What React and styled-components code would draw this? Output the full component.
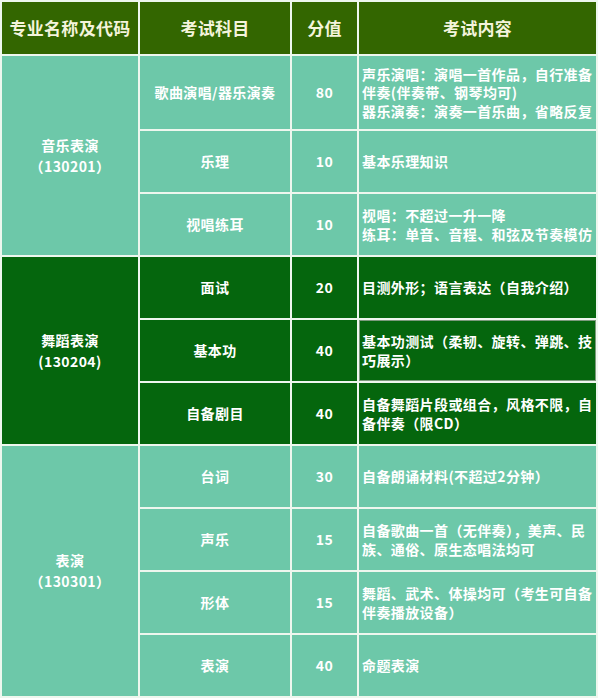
import React from "react";
import styled, { createGlobalStyle, css } from "styled-components";

const Global = createGlobalStyle`
  html, body { margin: 0; padding: 0; background: #ffffff; }
  body { font-family: "Noto Sans CJK SC", "Noto Sans", sans-serif; }
`;

const tones = {
  head: css`background: #336600; color: #f4f4dc;`,
  light: css`background: #6dc8a9; color: #ffffff;`,
  dark: css`background: #05660d; color: #ffffff;`,
};

const Table = styled.div`
  display: grid;
  grid-template-columns: 136px 150px 65px 237px;
  grid-template-rows: 52px 73px repeat(9, 61px);
  gap: 2px;
  padding: 2px;
  width: 598px;
  box-sizing: border-box;
  background: #eef7ee;
`;

const Cell = styled.div`
  ${(p) => tones[p.$tone]}
  display: flex;
  align-items: center;
  justify-content: ${(p) => (p.$left ? "flex-start" : "center")};
  text-align: ${(p) => (p.$left ? "left" : "center")};
  padding: ${(p) => (p.$left ? "0 0 0 3px" : "0")};
  grid-row: span ${(p) => p.$span || 1};
  font-size: 14px;
  font-weight: 700;
  letter-spacing: 0.4px;
  line-height: 18.5px;
  white-space: nowrap;
  box-shadow: ${(p) => (p.$outlined ? "inset 0 0 0 1px #7d9a7d" : "none")};
`;

const HeadCell = styled(Cell)`
  font-size: 17px;
  letter-spacing: 0.3px;
`;

const Major = styled(Cell)`
  flex-direction: column;
  line-height: 21px;
`;

const groups = [
  {
    tone: "light",
    name: "音乐表演",
    code: "（130201）",
    rows: [
      ["歌曲演唱/器乐演奏", "80", ["声乐演唱：演唱一首作品，自行准备", "伴奏(伴奏带、钢琴均可)", "器乐演奏：演奏一首乐曲，省略反复"]],
      ["乐理", "10", ["基本乐理知识"]],
      ["视唱练耳", "10", ["视唱：不超过一升一降", "练耳：单音、音程、和弦及节奏模仿"]],
    ],
  },
  {
    tone: "dark",
    name: "舞蹈表演",
    code: "(130204)",
    rows: [
      ["面试", "20", ["目测外形；语言表达（自我介绍）"]],
      ["基本功", "40", ["基本功测试（柔韧、旋转、弹跳、技", "巧展示）"], true],
      ["自备剧目", "40", ["自备舞蹈片段或组合，风格不限，自", "备伴奏（限CD）"]],
    ],
  },
  {
    tone: "light",
    name: "表演",
    code: "（130301）",
    rows: [
      ["台词", "30", ["自备朗诵材料(不超过2分钟）"]],
      ["声乐", "15", ["自备歌曲一首（无伴奏），美声、民", "族、通俗、原生态唱法均可"]],
      ["形体", "15", ["舞蹈、武术、体操均可（考生可自备", "伴奏播放设备）"]],
      ["表演", "40", ["命题表演"]],
    ],
  },
];

const Lines = ({ lines }) =>
  lines.map((l, i) => (
    <React.Fragment key={i}>
      {i > 0 && <br />}
      {l}
    </React.Fragment>
  ));

export default function App() {
  return (
    <>
      <Global />
      <Table>
        <HeadCell $tone="head">专业名称及代码</HeadCell>
        <HeadCell $tone="head">考试科目</HeadCell>
        <HeadCell $tone="head">分值</HeadCell>
        <HeadCell $tone="head">考试内容</HeadCell>
        {groups.map((g) =>
          g.rows.map((r, i) => (
            <React.Fragment key={g.name + i}>
              {i === 0 && (
                <Major $tone={g.tone} $span={g.rows.length}>
                  <span>{g.name}</span>
                  <span>{g.code}</span>
                </Major>
              )}
              <Cell $tone={g.tone}>{r[0]}</Cell>
              <Cell $tone={g.tone}>{r[1]}</Cell>
              <Cell $tone={g.tone} $left $outlined={r[3]}>
                <div>
                  <Lines lines={r[2]} />
                </div>
              </Cell>
            </React.Fragment>
          ))
        )}
      </Table>
    </>
  );
}
